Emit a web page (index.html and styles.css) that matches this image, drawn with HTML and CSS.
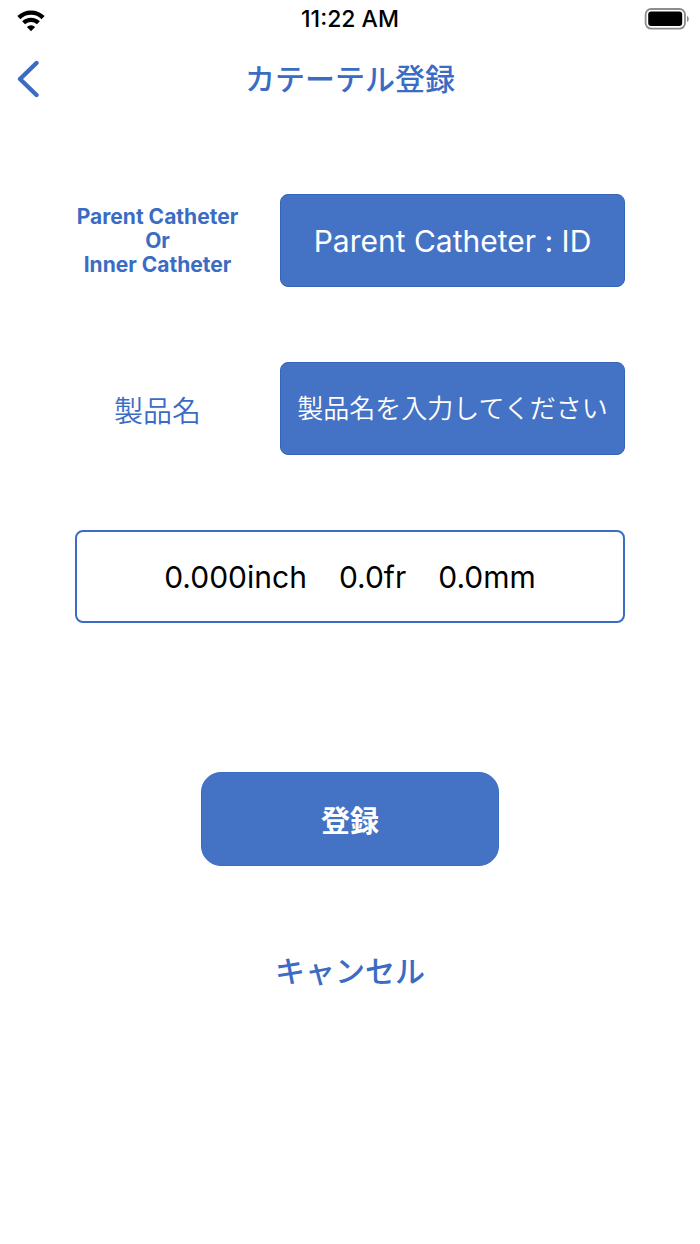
FILE: index.html
```
<!DOCTYPE html>
<html lang="ja">
<head>
    <meta charset="UTF-8">
    <meta name="viewport" content="width=device-width, initial-scale=1.0">
    <title>カテーテル登録</title>
    <link rel="stylesheet" href="styles.css">
</head>
<body>

<!-- Status Bar -->
<div class="status-bar">
    <svg class="wifi" viewBox="0 0 28 22" width="28" height="22" aria-hidden="true">
        <path d="M1.9 7.6A17.2 17.2 0 0 1 26.1 7.6" fill="none" stroke="#000" stroke-width="4.4"/>
        <path d="M6.6 12.8A10.6 10.6 0 0 1 21.4 12.8" fill="none" stroke="#000" stroke-width="4.2"/>
        <path d="M14 21.2L9.9 17A5.8 5.8 0 0 1 18.1 17Z"/>
    </svg>
    <span class="time">11:22 AM</span>
    <svg class="battery" viewBox="0 0 45 22" width="45" height="22" aria-hidden="true">
        <rect x="1.6" y="1" width="39.4" height="19.6" rx="5.5" fill="none" stroke="#8c8c8c" stroke-width="1.8"/>
        <rect x="4.2" y="3.6" width="34" height="14.4" rx="3"/>
        <path d="M43 7.8Q44.8 8.6 44.8 10.9T43 14Z" fill="#8c8c8c"/>
    </svg>
</div>

<header class="nav-bar">
    <button type="button" class="back-btn" aria-label="戻る">
        <svg viewBox="0 0 24 38" width="24" height="38" aria-hidden="true">
            <path d="M20.5 3L4 19L20.5 35" fill="none" stroke="#3b6cc4" stroke-width="4.4" stroke-linecap="round" stroke-linejoin="round"/>
        </svg>
    </button>
    <h1 class="title">カテーテル登録</h1>
</header>

<form class="catheter-form">
    <div class="form-row">
        <label class="type-label" for="catheterType">Parent Catheter<br>Or<br>Inner Catheter</label>
        <button type="button" class="field type-btn" id="catheterType">Parent Catheter : ID</button>
    </div>

    <div class="form-row">
        <label class="product-label" for="productName">製品名</label>
        <input type="text" class="field product-input" id="productName" placeholder="製品名を入力してください">
    </div>

    <!-- Size Values -->
    <div class="sizes">
        <span>0.000inch</span>
        <span>0.0fr</span>
        <span>0.0mm</span>
    </div>

    <button type="submit" class="submit-btn">登録</button>
    <button type="button" class="cancel-btn">キャンセル</button>
</form>

</body>
</html>
```
FILE: styles.css
```
/* General Styles */
* {
    box-sizing: border-box;
}

body {
    font-family: Inter, 'Noto Sans CJK JP', sans-serif;
    background-color: #fff;
    color: #000;
    margin: 0;
}

button,
input {
    font-family: inherit;
    margin: 0;
    padding: 0;
}

button {
    cursor: pointer;
}

svg {
    display: block;
}

/* Status Bar */
.status-bar {
    display: grid;
    grid-template-columns: 1fr auto 1fr;
    align-items: center;
    height: 40px;
    padding: 0 11px 2px;
}

.wifi {
    margin: 4px 0 0 6px;
}

.battery {
    justify-self: end;
}

.time {
    font-size: 23px;
    font-weight: 500;
}

/* Navigation */
.nav-bar {
    display: grid;
    grid-template-columns: 48px 1fr 48px;
    align-items: center;
    height: 78px;
    padding: 0 16px;
}

.back-btn {
    border: none;
    background: none;
}

.title {
    margin: 0;
    font-size: 30px;
    font-weight: 500;
    line-height: 40px;
    text-align: center;
    color: #3b6cc4;
}

/* Form */
.catheter-form {
    display: flex;
    flex-direction: column;
    padding: 76px 75px 0;
}

.form-row {
    display: grid;
    grid-template-columns: 30% 1fr;
    align-items: center;
    column-gap: 40px;
    margin-bottom: 75px;
}

.type-label,
.product-label {
    text-align: center;
    color: #3b6cc4;
}

.type-label {
    font-size: 21px;
    font-weight: 700;
    line-height: 24px;
    white-space: nowrap;
}

.product-label {
    font-size: 29px;
    font-weight: 350;
}

.field {
    width: 100%;
    height: 93px;
    border: 1px solid #3565b8;
    border-radius: 8px;
    background-color: #4472c4;
    color: #fff;
    text-align: center;
}

.type-btn {
    font-size: 30px;
    font-weight: 400;
    font-feature-settings: 'calt' 0;
}

.product-input {
    font-size: 26px;
    font-weight: 350;
}

.product-input::placeholder {
    color: #fff;
    opacity: 1;
}

.sizes {
    display: flex;
    justify-content: center;
    align-items: center;
    gap: 32px;
    height: 93px;
    border: 2px solid #3b6cc4;
    border-radius: 8px;
    font-size: 30px;
}

/* Buttons */
.submit-btn {
    align-self: center;
    width: 298px;
    height: 94px;
    margin-top: 149px;
    border: 1px solid #3b6cc4;
    border-radius: 20px;
    background-color: #4472c4;
    color: #fff;
    font-size: 29px;
    font-weight: 700;
}

.cancel-btn {
    align-self: center;
    margin-top: 80px;
    border: none;
    background: none;
    color: #3b6cc4;
    font-size: 30px;
    font-weight: 500;
    line-height: 50px;
}
```
